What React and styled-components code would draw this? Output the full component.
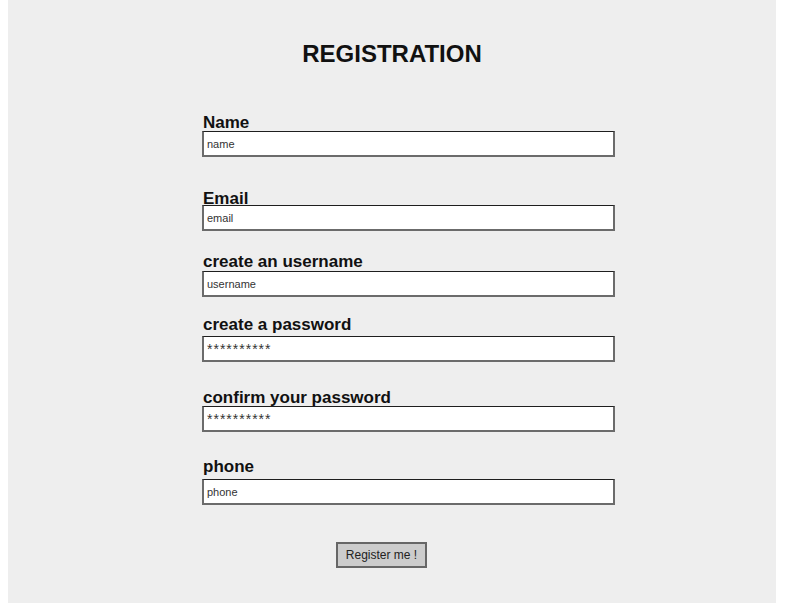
import React from "react"
import styled, { createGlobalStyle } from "styled-components"

const GlobalStyle = createGlobalStyle`
  html, body {
    margin: 0;
    padding: 0;
    background: #ffffff;
  }
  * {
    box-sizing: border-box;
  }
`

const fields = [
  { label: "Name", value: "name", top: 45, gap: -1 },
  { label: "Email", value: "email", top: 32, gap: -3 },
  { label: "create an username", value: "username", top: 21, gap: 0 },
  { label: "create a password", value: "**********", top: 18, gap: 2, secret: true },
  { label: "confirm your password", value: "**********", top: 26, gap: -1, secret: true },
  { label: "phone", value: "phone", top: 25, gap: 3 },
]

export default function App() {
  return (
    <>
      <GlobalStyle />
      <Panel>
        <Title>REGISTRATION</Title>
        <Form onSubmit={e => e.preventDefault()}>
          {fields.map(f => (
            <Field key={f.label} $top={f.top}>
              <Label $gap={f.gap}>{f.label}</Label>
              <Input type="text" defaultValue={f.value} readOnly $secret={f.secret} />
            </Field>
          ))}
          <ButtonRow>
            <Button type="submit">Register me !</Button>
          </ButtonRow>
        </Form>
      </Panel>
    </>
  )
}

const Panel = styled.div`
  margin: 0 8px;
  width: 768px;
  min-height: 603px;
  background: #eeeeee;
  padding-top: 40px;
`

const Title = styled.h1`
  margin: 0;
  text-align: center;
  font-family: "Liberation Sans", Arial, sans-serif;
  font-weight: bold;
  font-size: 24px;
  line-height: 28px;
  color: #111;
`

const Form = styled.form`
  display: flex;
  flex-direction: column;
  padding-left: 194px;
  width: 607px;
`

const Field = styled.div`
  display: flex;
  flex-direction: column;
  margin-top: ${p => p.$top}px;
`

const Label = styled.label`
  padding: 1px 0 0 1px;
  font-family: "Liberation Sans", Arial, sans-serif;
  font-weight: bold;
  font-size: 17px;
  line-height: 18px;
  color: #111;
  margin-bottom: ${p => p.$gap}px;
`

const Input = styled.input`
  width: 413px;
  height: 26px;
  margin: 0;
  padding: 0 4px 0 3px;
  background: #ffffff;
  border: 2px solid #6b6b6b;
  border-top: 1px solid #1e1e1e;
  border-radius: 0;
  font-family: "Liberation Sans", Arial, sans-serif;
  font-size: ${p => (p.$secret ? "14px" : "11px")};
  color: #333;
  letter-spacing: ${p => (p.$secret ? "1px" : "0")};
  outline: none;
`

const ButtonRow = styled.div`
  display: flex;
  margin-top: 37px;
  padding-left: 134px;
`

const Button = styled.button`
  width: 91px;
  height: 26px;
  padding: 0;
  background: #cccccc;
  border: 2px solid #666;
  border-radius: 0;
  font-family: "Liberation Sans", Arial, sans-serif;
  font-size: 12px;
  color: #222;
  cursor: pointer;
`
